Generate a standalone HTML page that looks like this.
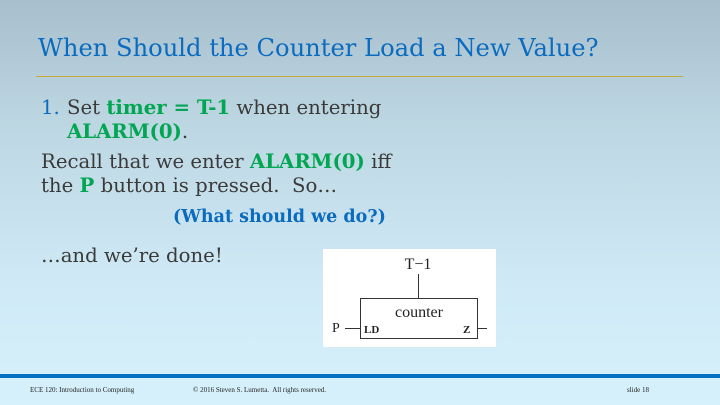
<!DOCTYPE html>
<html><head><style>
body{margin:0;width:720px;height:405px;overflow:hidden;position:relative;font-family:"DejaVu Serif",serif;background:linear-gradient(#a8bfcc 0%,#bcd6e2 30%,#cfeaf6 70%,#d6f1fb 100%)}
.t{position:absolute;white-space:nowrap}
.body{font-size:19.7px;color:#3a3a3a}
.g{color:#00a651;font-weight:bold}
.b{color:#0a6bbf;font-weight:bold}
</style></head><body>
<div class="t" style="left:38px;top:34px;font-size:24.2px;color:#0a6bbf">When Should the Counter Load a New Value?</div>
<div style="position:absolute;left:36px;top:76px;width:647px;height:1px;background:#c8a93a"></div>
<div class="t body" style="left:41px;top:96px"><span style="color:#0a6bbf">1.</span></div>
<div class="t body" style="left:67px;top:96px">Set <span class="g">timer = T-1</span> when entering</div>
<div class="t body" style="left:67px;top:120px"><span class="g">ALARM(0)</span>.</div>
<div class="t body" style="left:41px;top:150px">Recall that we enter <span class="g">ALARM(0)</span> iff</div>
<div class="t body" style="left:41px;top:174px">the <span class="g">P</span> button is pressed.&nbsp; So…</div>
<div class="t body" style="left:173px;top:207px;font-size:17.5px"><span class="b">(What should we do?)</span></div>
<div class="t body" style="left:41px;top:244px">…and we’re done!</div>
<div style="position:absolute;left:323px;top:249px;width:173px;height:98px;background:#fff">
<svg width="173" height="98" style="position:absolute;left:0;top:0">
<rect x="37.5" y="49.5" width="117" height="40" fill="none" stroke="#333" stroke-width="1"/>
<line x1="95.5" y1="25" x2="95.5" y2="49" stroke="#333"/>
<line x1="22" y1="79.5" x2="37" y2="79.5" stroke="#333"/>
<line x1="155" y1="79.5" x2="164" y2="79.5" stroke="#333"/>
<text x="95" y="20" font-size="16" text-anchor="middle" fill="#222" font-family="Liberation Serif">T−1</text>
<text x="96" y="68" font-size="16" text-anchor="middle" fill="#222" font-family="Liberation Serif">counter</text>
<text x="9" y="83" font-size="14" fill="#222" font-family="Liberation Serif">P</text>
<text x="41" y="84" font-size="11" font-weight="bold" fill="#222" font-family="Liberation Serif">LD</text>
<text x="140" y="84" font-size="11" font-weight="bold" fill="#222" font-family="Liberation Serif">Z</text>
</svg></div>
<div style="position:absolute;left:0;top:374px;width:720px;height:4px;background:#0070c0"></div>
<div class="t" style="left:30px;top:386px;font-size:7px;color:#222;font-family:'Liberation Serif',serif">ECE 120: Introduction to Computing</div>
<div class="t" style="left:193px;top:386px;font-size:7px;color:#222;font-family:'Liberation Serif',serif">© 2016 Steven S. Lumetta.&nbsp; All rights reserved.</div>
<div class="t" style="left:627px;top:386px;font-size:7px;color:#222;font-family:'Liberation Serif',serif">slide 18</div>
</body></html>
